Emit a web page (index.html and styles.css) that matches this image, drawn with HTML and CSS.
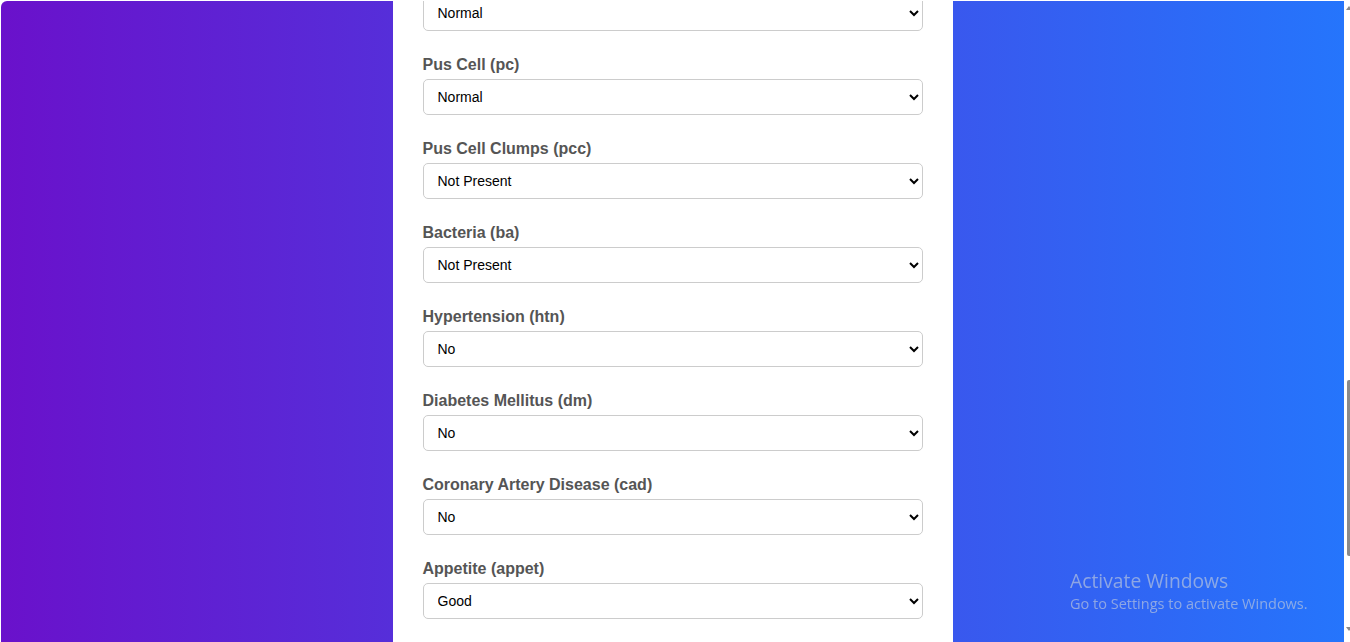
FILE: index.html
```html
<!DOCTYPE html>
<html>
<head>
<meta charset="utf-8">
<link rel="stylesheet" href="styles.css">
</head>
<body>
<div class="page">
  <div class="container">
    <form class="form">
      <div class="group first">
        <select class="field"><option>Normal</option><option>Abnormal</option></select>
      </div>
      <div class="group">
        <label class="label">Pus Cell (pc)</label>
        <select class="field"><option>Normal</option><option>Abnormal</option></select>
      </div>
      <div class="group">
        <label class="label">Pus Cell Clumps (pcc)</label>
        <select class="field"><option>Not Present</option><option>Present</option></select>
      </div>
      <div class="group">
        <label class="label">Bacteria (ba)</label>
        <select class="field"><option>Not Present</option><option>Present</option></select>
      </div>
      <div class="group">
        <label class="label">Hypertension (htn)</label>
        <select class="field"><option>No</option><option>Yes</option></select>
      </div>
      <div class="group">
        <label class="label">Diabetes Mellitus (dm)</label>
        <select class="field"><option>No</option><option>Yes</option></select>
      </div>
      <div class="group">
        <label class="label">Coronary Artery Disease (cad)</label>
        <select class="field"><option>No</option><option>Yes</option></select>
      </div>
      <div class="group">
        <label class="label">Appetite (appet)</label>
        <select class="field"><option>Good</option><option>Poor</option></select>
      </div>
    </form>
  </div>
  <div class="scrollbar">
    <div class="arrow up"></div>
    <div class="thumb"></div>
    <div class="arrow down"></div>
  </div>
</div>
<div class="activate">
  <div class="act-title">Activate Windows</div>
  <div class="act-sub">Go to Settings to activate Windows.</div>
</div>
</body>
</html>
```
FILE: styles.css
```css
html, body {
  margin: 0;
  padding: 0;
  height: 642px;
  overflow: hidden;
  background: #ffffff;
  font-family: "Liberation Sans", Arial, sans-serif;
}
.page {
  display: flex;
  margin: 1px 0 0 1px;
  height: 641px;
  width: 1349px;
}
.container {
  flex: 0 0 auto;
  display: flex;
  justify-content: center;
  width: 1343px;
  height: 641px;
  background: linear-gradient(to right, #6a11cb, #2575fc);
  border-top-left-radius: 6px;
  overflow: hidden;
}
.form {
  width: 500px;
  padding: 0 30px;
  background: #ffffff;
  margin: 0;
  display: flex;
  flex-direction: column;
}
.group {
  display: flex;
  flex-direction: column;
  margin-bottom: 25px;
}
.group.first {
  margin-top: -6px;
}
.label {
  font-size: 16px;
  line-height: 18px;
  font-weight: bold;
  color: #555555;
  margin-bottom: 5px;
}
.field {
  width: 500px;
  height: 36px;
  box-sizing: border-box;
  padding: 0 10px;
  font-family: "Liberation Sans", Arial, sans-serif;
  font-size: 14px;
  color: #000000;
  background: #ffffff;
  border: 1px solid #cccccc;
  border-radius: 5px;
}
.scrollbar {
  flex: 0 0 6px;
  position: relative;
  background: #ffffff;
}
.thumb {
  position: absolute;
  left: 3px;
  width: 3px;
  top: 379px;
  height: 176px;
  background: #8a8a8a;
  border-radius: 2px 0 0 2px;
}
.arrow {
  position: absolute;
  left: 2px;
  width: 0;
  height: 0;
  border-left: 3px solid transparent;
  border-right: 3px solid transparent;
}
.arrow.up {
  top: 5px;
  border-bottom: 4px solid #8a8a8a;
}
.arrow.down {
  top: 626px;
  border-top: 4px solid #8a8a8a;
}
.activate {
  position: fixed;
  left: 1070px;
  top: 569px;
  font-family: "Open Sans", "Noto Sans", sans-serif;
  color: rgba(190, 200, 220, 0.66);
}
.act-title {
  font-size: 19.3px;
  line-height: 24px;
}
.act-sub {
  font-size: 14.5px;
  line-height: 22px;
}
```
